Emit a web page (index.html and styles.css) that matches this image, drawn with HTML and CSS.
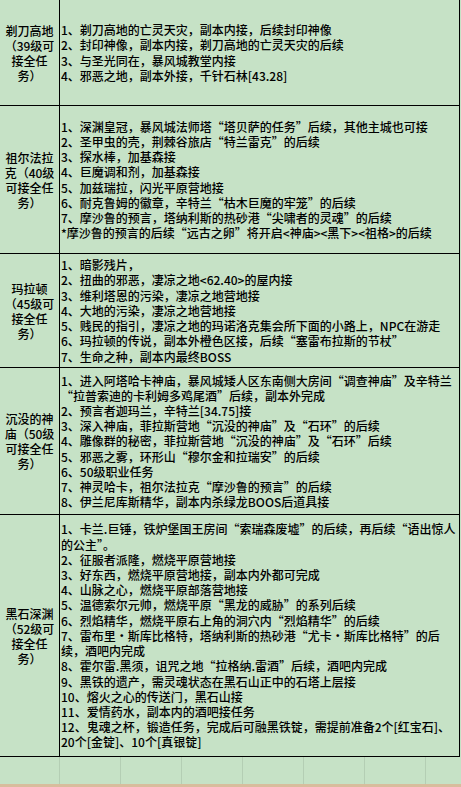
FILE: index.html
```html
<!DOCTYPE html>
<html lang="zh-CN">
<head>
<meta charset="utf-8">
<title>副本任务</title>
<link rel="stylesheet" href="styles.css">
</head>
<body>
<div class="sheet">
  <div class="row r1">
    <div class="name">剃刀高地<br>（39级可<br>接全任<br>务）</div>
    <div class="tasks">
      <div>1、剃刀高地的亡灵天灾，副本内接，后续封印神像</div>
      <div>2、封印神像，副本内接，剃刀高地的亡灵天灾的后续</div>
      <div>3、与圣光同在，暴风城教堂内接</div>
      <div>4、邪恶之地，副本外接，千针石林[43.28]</div>
    </div>
  </div>
  <div class="row r2">
    <div class="name">祖尔法拉<br>克（40级<br>可接全任<br>务）</div>
    <div class="tasks">
      <div>1、深渊皇冠，暴风城法师塔“塔贝萨的任务”后续，其他主城也可接</div>
      <div>2、圣甲虫的壳，荆棘谷旅店“特兰雷克”的后续</div>
      <div>3、探水棒，加基森接</div>
      <div>4、巨魔调和剂，加基森接</div>
      <div>5、加兹瑞拉，闪光平原营地接</div>
      <div>6、耐克鲁姆的徽章，辛特兰“枯木巨魔的牢笼”的后续</div>
      <div>7、摩沙鲁的预言，塔纳利斯的热砂港“尖啸者的灵魂”的后续</div>
      <div>*摩沙鲁的预言的后续“远古之卵”将开启&lt;神庙&gt;&lt;黑下&gt;&lt;祖格&gt;的后续</div>
    </div>
  </div>
  <div class="row r3">
    <div class="name">玛拉顿<br>（45级可<br>接全任<br>务）</div>
    <div class="tasks">
      <div>1、暗影残片，</div>
      <div>2、扭曲的邪恶，凄凉之地&lt;62.40&gt;的屋内接</div>
      <div>3、维利塔恩的污染，凄凉之地营地接</div>
      <div>4、大地的污染，凄凉之地营地接</div>
      <div>5、贱民的指引，凄凉之地的玛诺洛克集会所下面的小路上，NPC在游走</div>
      <div>6、玛拉顿的传说，副本外橙色区接，后续“塞雷布拉斯的节杖”</div>
      <div>7、生命之种，副本内最终BOSS</div>
    </div>
  </div>
  <div class="row r4">
    <div class="name">沉没的神<br>庙（50级<br>可接全任<br>务）</div>
    <div class="tasks">
      <div>1、进入阿塔哈卡神庙，暴风城矮人区东南侧大房间“调查神庙”及辛特兰</div>
      <div>“拉普索迪的卡利姆多鸡尾酒”后续，副本外完成</div>
      <div>2、预言者迦玛兰，辛特兰[34.75]接</div>
      <div>3、深入神庙，菲拉斯营地“沉没的神庙”及“石环”的后续</div>
      <div>4、雕像群的秘密，菲拉斯营地“沉没的神庙”及“石环”后续</div>
      <div>5、邪恶之雾，环形山“穆尔金和拉瑞安”的后续</div>
      <div>6、50级职业任务</div>
      <div>7、神灵哈卡，祖尔法拉克“摩沙鲁的预言”的后续</div>
      <div>8、伊兰尼库斯精华，副本内杀绿龙BOOS后道具接</div>
    </div>
  </div>
  <div class="row r5">
    <div class="name">黑石深渊<br>（52级可<br>接全任<br>务）</div>
    <div class="tasks">
      <div>1、卡兰.巨锤，铁炉堡国王房间“索瑞森废墟”的后续，再后续“语出惊人</div>
      <div>的公主”。</div>
      <div>2、征服者派隆，燃烧平原营地接</div>
      <div>3、好东西，燃烧平原营地接，副本内外都可完成</div>
      <div>4、山脉之心，燃烧平原部落营地接</div>
      <div>5、温德索尔元帅，燃烧平原“黑龙的威胁”的系列后续</div>
      <div>6、烈焰精华，燃烧平原右上角的洞穴内“烈焰精华”的后续</div>
      <div>7、雷布里·斯库比格特，塔纳利斯的热砂港“尤卡·斯库比格特”的后</div>
      <div>续，酒吧内完成</div>
      <div>8、霍尔雷.黑须，诅咒之地“拉格纳.雷酒”后续，酒吧内完成</div>
      <div>9、黑铁的遗产，需灵魂状态在黑石山正中的石塔上层接</div>
      <div>10、熔火之心的传送门，黑石山接</div>
      <div>11、爱情药水，副本内的酒吧接任务</div>
      <div>12、鬼魂之杯，锻造任务，完成后可融黑铁锭，需提前准备2个[红宝石]、</div>
      <div>20个[金锭]、10个[真银锭]</div>
    </div>
  </div>
  <div class="grid">
    <div class="cell"></div><div class="cell"></div><div class="cell"></div><div class="cell"></div>
    <div class="cell"></div><div class="cell"></div><div class="cell"></div><div class="cell last"></div>
  </div>
  <div class="strip"></div>
</div>
</body>
</html>
```
FILE: styles.css
```css
html, body {
  margin: 0;
  padding: 0;
  background: #c6e2c6;
}
body {
  width: 461px;
  height: 787px;
  overflow: hidden;
  font-family: "Noto Sans CJK SC", "Noto Sans", sans-serif;
  font-size: 12px;
  font-weight: 500;
  color: #000;
}
.sheet {
  width: 461px;
  display: flex;
  flex-direction: column;
}
.row {
  box-sizing: border-box;
  width: 460px;
  display: flex;
  border-bottom: 1px solid #000;
  border-right: 1px solid #000;
}
.r1 { height: 106px; }
.r2 { height: 148px; }
.r3 { height: 114px; }
.r4 { height: 147px; }
.r5 { height: 242px; }
.name {
  box-sizing: border-box;
  width: 60px;
  flex: none;
  border-right: 1px solid #000;
  display: flex;
  align-items: center;
  justify-content: center;
  text-align: center;
  line-height: 15px;
}
.tasks {
  flex: 1;
  min-width: 0;
  display: flex;
  flex-direction: column;
  justify-content: center;
  padding-left: 1px;
  line-height: 15.2px;
  white-space: nowrap;
  overflow: hidden;
}
.grid {
  width: 461px;
  height: 27px;
  display: flex;
  overflow: hidden;
}
.cell {
  box-sizing: border-box;
  width: 61px;
  flex: none;
  border-right: 1px solid #b4ceb4;
}
.cell:first-child { width: 60px; }
.cell.last {
  flex: 1;
  width: auto;
  border-right: none;
}
.strip {
  height: 10px;
  background: #d8bd9d;
}
```
